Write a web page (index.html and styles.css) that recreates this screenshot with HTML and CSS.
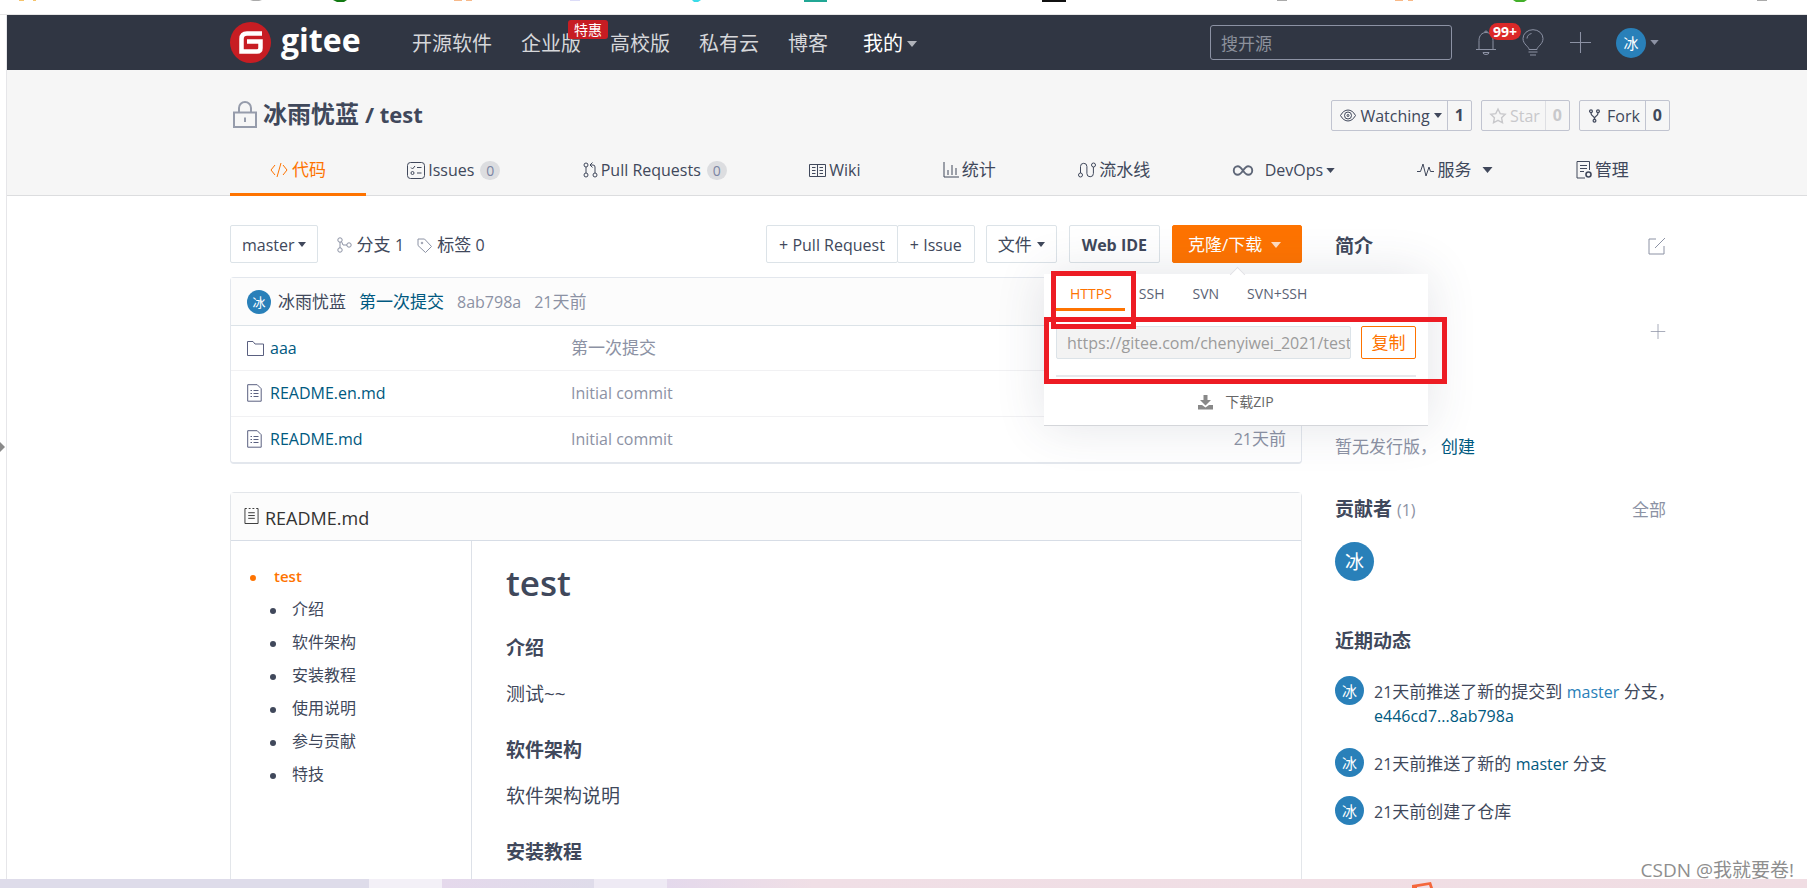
FILE: index.html
```html
<!DOCTYPE html>
<html lang="zh-CN">
<head>
<meta charset="utf-8">
<title>冰雨忧蓝/test - Gitee</title>
<link rel="stylesheet" href="styles.css">
</head>
<body>
<svg class="sprite" aria-hidden="true">
  <symbol id="file" viewBox="0 0 15 18"><path d="M.7.700h9.500l4 4v12.500H.7zM3.500 6.500h1.500M3.500 9.500h1.500M3.500 12.500h1.500M6.500 6.500h5M6.500 9.500h5M6.500 12.500h5"/></symbol>
  <symbol id="caret" viewBox="0 0 10 6"><path d="M0 0h10L5 6z"/></symbol>
  <symbol id="plus" viewBox="0 0 20 20"><path d="M10 0v20M0 10h20"/></symbol>
</svg>
<div class="bookmarks">
  <svg class="bookmarks-icons" width="1807" height="3" aria-hidden="true">
    <path d="M19 0h5v1h-5zM33 0h3v1h-3z" fill="#f5c36b"/><path d="M250 0h12l-3 1h-6z" fill="#aaa"/>
    <path d="M333 0h14l-3 2h-7z" fill="#127a12"/><path d="M454 0h8v1h-8zM466 0h6v1h-6z" fill="#f7b98a"/>
    <path d="M570 0h10v1h-10z" fill="#dcdcf8"/><path d="M692 0h9l-3 2h-4z" fill="#3adbe8"/>
    <path d="M804 0h23v2h-23z" fill="#21a795"/><path d="M1042 0h24v2h-24z" fill="#111"/>
    <path d="M1277 0h10v1h-10z" fill="#aaa"/><path d="M1395 0h8v1h-8zM1408 0h5v1h-5z" fill="#f9b987"/>
    <path d="M1513 0h14l-3 2h-8z" fill="#43b02a"/><path d="M1757 0h10v1h-10z" fill="#aaa"/>
  </svg>
</div>
<div class="window">
  <div class="edge"><svg width="5" height="10" viewBox="0 0 5 10"><path d="M0 0l5 5-5 5z" fill="#8a8a8a"/></svg></div>
  <div class="page">
    <header class="topbar">
      <div class="container topbar-row">
        <a class="logo" href="#" aria-label="gitee">
          <svg width="41" height="41" viewBox="0 0 41 41"><circle cx="20.500" cy="20.500" r="20.500" fill="#c71d23"/><path d="M32 11.500H17q-5.500 0-5.500 5.500v12.500H27q3.500 0 3.500-3.500v-6.500H17" fill="none" stroke="#fff" stroke-width="4.500"/></svg>
          <span>gitee</span>
        </a>
        <nav class="mainnav">
          <a href="#">开源软件</a>
          <a href="#" class="promo">企业版<span class="promo-badge">特惠</span></a>
          <a href="#">高校版</a><a href="#">私有云</a><a href="#">博客</a>
          <a href="#" class="mine">我的<svg class="caret" width="10" height="6"><use href="#caret"/></svg></a>
        </nav>
        <input class="search" type="search" placeholder="搜开源" aria-label="搜开源">
        <div class="tools">
          <a href="#" class="bell" aria-label="通知"><svg width="20" height="25" viewBox="0 0 20 25"><path d="M0 19.500h20M3 19.500V10.500c0-5 3-8 7-8s7 3 7 8v9M8.500 2.500a1.500 1.500 0 0 1 3 0M7 22.500h6a3 2 0 0 1-6 0z"/></svg><span class="count-badge">99+</span></a>
          <a href="#" class="bulb" aria-label="帮助"><svg width="22" height="27" viewBox="0 0 22 27"><path d="M7 20.500c0-3-6-5-6-11a10 8.800 0 0 1 20 0c0 6-6 8-6 11zM6.500 23h9M8 26h6M5 9.500c0-2.500 2-4.500 4.500-5"/></svg></a>
          <a href="#" class="add" aria-label="新建"><svg width="21" height="21"><use href="#plus"/></svg></a>
          <a href="#" class="me"><span class="avatar avatar-30">冰</span><svg class="caret" width="9" height="5"><use href="#caret"/></svg></a>
        </div>
      </div>
    </header>

    <section class="repohead">
      <div class="container">
        <div class="repo-row">
          <h1 class="repo-title"><svg width="24" height="27" viewBox="0 0 24 27"><path d="M1 11.500h22V26H1zM6 11.500V7a6 6 0 0 1 12 0v4.500M12 16.500v4.500"/></svg><span>冰雨忧蓝</span><span class="latin">/ test</span></h1>
          <div class="repo-actions">
            <div class="split"><button type="button"><svg class="ico" width="16" height="13" viewBox="0 0 16 12"><path d="M.5 6c3.800-7.300 11.200-7.300 15 0-3.800 7.300-11.200 7.300-15 0z"/><circle cx="8" cy="6" r="3.500"/><circle cx="8" cy="6" r="1"/></svg>Watching<svg class="caret" width="8" height="5"><use href="#caret"/></svg></button><a href="#">1</a></div>
            <div class="split disabled"><button type="button"><svg class="ico bold" width="16" height="16" viewBox="0 0 16 16"><path d="M8 1l2.200 4.600 5 .7-3.600 3.500.9 5L8 12.400l-4.500 2.400.9-5L.8 6.300l5-.7z"/></svg>Star</button><a href="#">0</a></div>
            <div class="split fork"><button type="button"><svg class="ico bold" width="13" height="14" viewBox="0 0 13 16"><circle cx="2.500" cy="2.500" r="1.600"/><circle cx="10.500" cy="2.500" r="1.600"/><circle cx="6.500" cy="13.500" r="1.600"/><path d="M2.500 4.500c0 4.500 4 2.500 4 7 0-4.500 4-2.500 4-7"/></svg>Fork</button><a href="#">0</a></div>
          </div>
        </div>
        <nav class="tabs">
          <a href="#" class="active"><svg class="ico" width="18" height="16" viewBox="0 0 18 16"><path d="M5 3L1 8l4 5M13 3l4 5-4 5M11 1L7 15"/></svg>代码</a>
          <a href="#"><svg class="ico" width="18" height="17" viewBox="0 0 18 17"><rect x=".5" y=".5" width="17" height="16" rx="3"/><path d="M4 5.500l1.500 1.500L8 4M10 5.500h4.500M10 11h4.500"/><circle cx="5.500" cy="11" r="1.500"/></svg><span class="latin">Issues</span><span class="num">0</span></a>
          <a href="#"><svg class="ico" width="15" height="16" viewBox="0 0 15 16"><circle cx="3" cy="3" r="2"/><circle cx="3" cy="13" r="2"/><circle cx="12" cy="13" r="2"/><path d="M3 5v6M12 11V5q0-2-2-2H7M9.500 .5L7 3l2.500 2.500"/></svg><span class="latin">Pull Requests</span><span class="num">0</span></a>
          <a href="#"><svg class="ico" width="17" height="13" viewBox="0 0 17 13"><path d="M.5.500h16v12H.5zM8.500.500v12M3 3.500h3.500M3 6.500h3.500M3 9.500h3.500M10.500 3.500H14M10.500 6.500H14M10.500 9.500H14"/></svg><span class="latin">Wiki</span></a>
          <a href="#"><svg class="ico" width="16" height="16" viewBox="0 0 16 16"><path d="M1 0v15h15M5 13V8M9 13V3M13 13V6"/></svg>统计</a>
          <a href="#"><svg class="ico" width="18" height="16" viewBox="0 0 18 16"><circle cx="2.500" cy="13" r="2"/><circle cx="15.500" cy="3" r="2"/><path d="M2.500 11V4.500a3.200 3.200 0 0 1 6.400 0v7a3.200 3.200 0 0 0 6.500 0V5"/></svg>流水线</a>
          <a href="#" class="devops"><svg class="ico bold" width="20" height="11" viewBox="0 0 21 11"><path d="M10.500 5.500C8.500 2.500 7 1 5 1a4.200 4.500 0 0 0 0 9c2 0 3.500-1.500 5.500-4.500S14 1 16 1a4.200 4.500 0 0 1 0 9c-2 0-3.500-1.500-5.500-4.500z"/></svg><span class="latin">DevOps</span><svg class="caret" width="9" height="5"><use href="#caret"/></svg></a>
          <a href="#" class="service"><svg class="ico" width="17" height="14" viewBox="0 0 17 14"><path d="M0 8.500h3.500L6 1l3 12 3-9 1.500 4.500H17"/></svg>服务<svg class="caret" width="11" height="6"><use href="#caret"/></svg></a>
          <a href="#"><svg class="ico" width="16" height="18" viewBox="0 0 16 18"><path d="M13.500 9V.500H1V17h8M4 4.500h7M4 7.500h7M4 10.500h4"/><circle cx="12.500" cy="13.500" r="2.500" stroke-width="1.600"/></svg>管理</a>
        </nav>
      </div>
    </section>

    <main class="container columns">
      <div class="left">
        <div class="toolbar">
          <button type="button" class="btn branch">master<svg class="caret" width="8" height="5"><use href="#caret"/></svg></button>
          <a href="#" class="ref first"><svg width="15" height="16" viewBox="0 0 15 16"><circle cx="3" cy="3" r="2.200"/><circle cx="3" cy="13" r="2.200"/><circle cx="12" cy="8" r="2.200"/><path d="M3 5v6M4.500 4.500L6 8h4"/></svg><span>分支 <span class="latin">1</span></span></a>
          <a href="#" class="ref"><svg width="15" height="15" viewBox="0 0 15 15"><path d="M1 1h6.500L14.500 8.500l-6 6L1 7.500z"/><circle cx="5" cy="5" r=".8"/></svg><span>标签 <span class="latin">0</span></span></a>
          <div class="group"><button type="button" class="btn">+ Pull Request</button><button type="button" class="btn">+ Issue</button></div>
          <button type="button" class="btn zh">文件<svg class="caret" width="8" height="5"><use href="#caret"/></svg></button>
          <button type="button" class="btn ide">Web IDE</button>
          <div class="clone">
            <button type="button" class="btn primary">克隆/下载<svg class="caret" width="10" height="6"><use href="#caret"/></svg></button>
            <div class="popup">
              <div class="protocols"><button type="button" class="on">HTTPS</button><button type="button">SSH</button><button type="button">SVN</button><button type="button">SVN+SSH</button></div>
              <div class="url"><input type="text" readonly aria-label="仓库地址" value="https://gitee.com/chenyiwei_2021/test.git"><button type="button">复制</button></div>
              <a href="#" class="zip"><svg width="15" height="15" viewBox="0 0 15 15"><path d="M5.500 0h4v5H13L7.500 10.500 2 5h3.500zM0 10h4l3.500 2.500L11 10h4v4.500H0z"/></svg>下载ZIP</a>
              <div class="mark mark-tab"></div>
              <div class="mark mark-url"></div>
            </div>
          </div>
        </div>

        <table class="files">
          <thead><tr><th colspan="3"><div class="commit"><span class="avatar avatar-24">冰</span><span class="author">冰雨忧蓝</span><a href="#">第一次提交</a><span class="latin">8ab798a</span><span><span class="latin">21</span>天前</span></div></th></tr></thead>
          <tbody>
            <tr><td class="name"><a href="#"><svg width="17" height="15" viewBox="0 0 17 15"><path d="M.5.500H6l2 2.500h8.500v11.500H.5z"/></svg>aaa</a></td><td class="zh">第一次提交</td><td class="zh when"></td></tr>
            <tr><td class="name"><a href="#"><svg class="doc-icon" width="15" height="18"><use href="#file"/></svg>README.en.md</a></td><td>Initial commit</td><td class="zh when"></td></tr>
            <tr><td class="name"><a href="#"><svg class="doc-icon" width="15" height="18"><use href="#file"/></svg>README.md</a></td><td>Initial commit</td><td class="zh when"><span class="latin">21</span>天前</td></tr>
          </tbody>
        </table>

        <section class="readme">
          <div class="readme-head"><svg width="15" height="18" viewBox="0 0 16 18"><path d="M1 1v16h14V1M1 1h2M5 1h2M9 1h2M13 1h2M4.500 5.500h7M4.500 8.500h7M4.500 11.500h7"/></svg>README.md</div>
          <div class="readme-body">
            <ul class="toc"><li class="current"><a href="#">test</a>
              <ul><li><a href="#">介绍</a></li><li><a href="#">软件架构</a></li><li><a href="#">安装教程</a></li><li><a href="#">使用说明</a></li><li><a href="#">参与贡献</a></li><li><a href="#">特技</a></li></ul></li></ul>
            <article class="doc">
              <h2>test</h2>
              <h3>介绍</h3><p>测试~~</p>
              <h3>软件架构</h3><p>软件架构说明</p>
              <h3>安装教程</h3>
            </article>
          </div>
        </section>
      </div>

      <aside class="side">
        <div class="side-head intro"><h2>简介</h2><a href="#" aria-label="编辑"><svg width="18" height="18" viewBox="0 0 18 18"><path d="M8 2H1v15h15v-8M7 11L17 1"/></svg></a></div>
        <div class="side-add"><a href="#" aria-label="添加"><svg width="16" height="15" viewBox="0 0 20 20"><use href="#plus"/></svg></a></div>
        <p class="release">暂无发行版，<a href="#">创建</a></p>
        <div class="side-head"><h2>贡献者 <small>(1)</small></h2><a href="#">全部</a></div>
        <span class="avatar avatar-39">冰</span>
        <h2 class="activity-title">近期动态</h2>
        <ul class="activity">
          <li><span class="avatar avatar-29">冰</span><p><span class="latin">21</span>天前推送了新的提交到 <a href="#" class="latin hover">master</a> 分支，<br><a href="#" class="latin">e446cd7...8ab798a</a></p></li>
          <li><span class="avatar avatar-29">冰</span><p><span class="latin">21</span>天前推送了新的 <a href="#" class="latin">master</a> 分支</p></li>
          <li><span class="avatar avatar-29">冰</span><p><span class="latin">21</span>天前创建了仓库</p></li>
        </ul>
      </aside>
    </main>
  </div>
</div>
<div class="watermark">CSDN @我就要卷!</div>
<footer class="taskbar"><svg width="24" height="6" viewBox="0 0 24 6"><path d="M1 6V3l19-3 2 6h-3l-1-3-12 2v1z" fill="#f4673c"/></svg></footer>
</body>
</html>
```
FILE: styles.css
```css
* { box-sizing: border-box; }
body {
  margin: 0;
  height: 100vh;
  display: flex;
  flex-direction: column;
  overflow: hidden;
  background: #fff;
  color: #40485b;
  font: 17px/24px "Open Sans", "Noto Sans CJK SC", sans-serif;
}
a { color: inherit; text-decoration: none; }
button, input { font: inherit; color: inherit; }
h1, h2, h3, p, ul { margin: 0; padding: 0; }
ul { list-style: none; }
svg { flex: none; fill: none; stroke: currentColor; overflow: visible; }
.sprite { position: absolute; width: 0; height: 0; }
.caret { fill: currentColor; stroke: none; }
.latin { font-size: 16px; }

.bookmarks { flex: none; height: 15px; border-bottom: 1px solid #e6e6e6; overflow: hidden; }
.bookmarks-icons { display: block; stroke: none; }
.window { flex: 1; min-height: 0; display: flex; }
.edge { width: 7px; border-right: 1px solid #e6e6e9; display: flex; align-items: center; }
.edge svg { stroke: none; }
.page { flex: 1; min-width: 0; overflow: hidden; }
.container { width: 80%; max-width: 1440px; margin-left: 223px; }

.topbar { background: #303643; height: 55px; color: #d6d7da; }
.topbar-row { height: 55px; display: flex; align-items: center; }
.logo { display: flex; align-items: center; gap: 10px; width: 182px; color: #fff; font: bold 32px/40px "Open Sans", sans-serif; }
.logo svg { stroke: none; }
.logo span { padding-bottom: 6px; }
.mainnav { display: flex; gap: 29px; padding-top: 2px; font-size: 20px; }
.promo { position: relative; }
.promo-badge { position: absolute; left: 47px; top: -12px; width: 40px; height: 19px; border-radius: 3px; background: #c71d23; color: #fff; font-size: 14px; line-height: 19px; text-align: center; }
.mine { display: flex; align-items: center; gap: 4px; margin-left: 6px; color: #fff; }
.mine .caret { color: #b0b3ba; }
.search { margin-left: auto; width: 242px; height: 35px; padding: 1px 10px 0; border: 1px solid #8c92a4; border-radius: 3px; background: transparent; }
.search::placeholder { color: #8c919c; }
.tools { display: flex; align-items: center; color: #8c92a4; margin-right: 11px; padding-left: 24px; }
.tools a { display: flex; align-items: center; }
.bell { position: relative; margin-right: 26px; }
.count-badge { position: absolute; left: 13px; top: -7px; width: 32px; height: 17px; border-radius: 9px; background: #db2828; color: #fff; font-size: 14px; font-weight: bold; line-height: 17px; text-align: center; }
.bulb { margin-right: 26px; }
.add { margin-right: 25px; }
.me { gap: 4px; }
.avatar { flex: none; display: inline-flex; align-items: center; justify-content: center; border-radius: 50%; background: #2980b9; color: #fff; }
.avatar-30 { width: 30px; height: 30px; font-size: 15px; }
.avatar-24 { width: 24px; height: 24px; font-size: 13px; }
.avatar-39 { width: 39px; height: 39px; font-size: 19px; }
.avatar-29 { width: 29px; height: 29px; font-size: 15px; }

.repohead { background: #f6f6f6; border-bottom: 1px solid #dcdddf; height: 126px; }
.repo-row { height: 80px; padding-top: 30px; display: flex; justify-content: space-between; align-items: flex-start; }
.repo-title { display: flex; align-items: center; gap: 6px; padding-left: 3px; font-size: 24px; line-height: 28px; }
.repo-title svg { color: #969cab; stroke-width: 2; }
.repo-title .latin { font-size: 22px; }
.repo-actions { display: flex; gap: 9px; font-size: 16px; }
.split { display: flex; height: 31px; border: 1px solid #c1c4d0; border-radius: 2px; }
.split button { display: flex; align-items: center; gap: 4px; padding: 0 5px 0 8px; border: 0; background: none; }
.split a { padding: 0 7px; border-left: 1px solid #c1c4d0; line-height: 29px; font-weight: bold; }
.fork button { gap: 6px; }
.disabled, .disabled svg { color: #c8c8cb; }
.disabled a { border-color: #dedfe3; }
.tabs { display: flex; height: 46px; }
.tabs a { flex: 1 1 auto; display: flex; align-items: center; justify-content: center; gap: 3px; height: 46px; padding-bottom: 3px; border-bottom: 3px solid transparent; white-space: nowrap; }
.tabs .active { color: #fe7300; border-color: #fe7300; flex: none; gap: 4px; padding-left: 40px; padding-right: 40px; }
.num { width: 20px; height: 19px; margin-left: 3px; border-radius: 10px; background: #dcdde0; color: #7b84a3; font-size: 14px; line-height: 19px; text-align: center; }
.bold { stroke-width: 2; }
.repo-actions .bold { stroke-width: 1.4; }
.devops .bold { color: #5f6778; }
.devops .latin { margin-left: 9px; }
.service .caret { margin-left: 8px; }

.columns { display: flex; gap: 33px; padding-top: 29px; }
.left { flex: 1; min-width: 0; }
.side { width: 335px; }
.toolbar { display: flex; align-items: center; height: 38px; margin-bottom: 14px; }
.btn { display: flex; align-items: center; gap: 5px; height: 38px; padding: 1px 11px 0; border: 1px solid #dce3e8; border-radius: 2px; background: #fff; font-size: 16px; white-space: nowrap; }
.branch { gap: 3px; padding: 1px 11px 0; }
.btn.zh { margin: 0 12px 0 11px; font-size: 17px; }
.ide { padding: 1px 12px 0; font-weight: bold; margin-right: 12px; }
.ref { display: flex; align-items: center; gap: 5px; margin-right: 13px; padding-top: 2px; }
.ref svg { color: #8c92a4; }
.first { margin-left: 19px; }
.group { display: flex; margin-left: auto; }
.group .btn { padding: 1px 12px 0; }
.group .btn + .btn { margin-left: -1px; }
.clone { position: relative; }
.primary { width: 130px; padding: 1px 15px 0; gap: 9px; border-color: #fe7300; background: #fe7300; color: #fff; font-size: 17px; }
.primary .caret { color: #ffdcc0; }
.popup { position: absolute; z-index: 2; left: -128px; top: 49px; width: 384px; height: 152px; padding: 0 12px; background: #fff; border-bottom: 1px solid #d4d6da; box-shadow: 0 0 50px rgba(60, 65, 90, .14); }
.popup::before { content: ""; position: absolute; left: 188px; top: -5px; width: 10px; height: 10px; background: #fff; border: 1px solid #e2e2e6; border-width: 1px 0 0 1px; transform: rotate(45deg); }
.protocols { display: flex; height: 37px; margin-bottom: 15px; }
.protocols button { padding: 5px 14px 0; border: 0; border-bottom: 3px solid transparent; background: none; color: #5a6274; font-size: 14px; }
.protocols .on { padding: 5px 13px 0 14px; color: #fe7300; border-color: #fe7300; }
.url { display: flex; gap: 10px; padding-bottom: 16px; border-bottom: 2px solid #e6e8ec; }
.url input { flex: 1; min-width: 0; height: 33px; padding: 1px 0 0 10px; border: 1px solid #dce3e8; border-radius: 2px; background: #f3f3f3; color: #9b9b9b; font-size: 16px; }
.url button { width: 55px; height: 33px; padding: 0; border: 1px solid #fe7300; border-radius: 2px; background: #fff; color: #fe7300; }
.zip { display: flex; align-items: center; justify-content: center; gap: 12px; height: 50px; color: #666; font-size: 14px; }
.zip svg { fill: #888; stroke: none; }
.mark { position: absolute; border: 5px solid #ed1c24; pointer-events: none; }
.mark-tab { left: 7px; top: -3px; width: 85px; height: 58px; }
.mark-url { left: 0; top: 43px; width: 403px; height: 67px; }

.files { width: 100%; height: 187px; margin-bottom: 28px; border: 1px solid #e3e7ed; border-bottom-width: 2px; border-radius: 4px; border-spacing: 0; color: #8c92a4; font-size: 16px; }
.files th { height: 48px; padding: 0 16px; background: #fcfcfc; border-bottom: 1px solid #dce3e8; font-weight: normal; font-size: 17px; }
.commit { display: flex; align-items: center; gap: 13px; }
.commit .author { color: #40485b; margin-left: -6px; }
.commit a, .name a, .release a, .activity a { color: #005980; }
.files td { height: 45px; padding: 0 15px 0 0; border-bottom: 1px solid #f1f1f3; }
.files tr:last-child td { border-bottom: 0; }
.files td.zh { font-size: 17px; }
.files .name { width: 340px; padding-left: 16px; }
.name a { display: flex; align-items: center; gap: 6px; }
.name svg { color: #5a6080; }
.name .doc-icon { margin-right: 2px; }
.when { text-align: right; }

.readme { border: 1px solid #e3e6ea; border-radius: 4px; }
.readme-head { display: flex; align-items: center; gap: 6px; height: 48px; padding: 3px 13px 0; background: #fcfcfc; border-bottom: 1px solid #d7dde6; color: #333; font-size: 18px; }
.readme-head svg { margin-bottom: 4px; }
.readme-body { display: flex; min-height: 400px; }
.toc { width: 241px; padding: 19px 0 0 19px; border-right: 1px solid #dde1e8; font-size: 16px; line-height: 33px; }
.toc li::before { content: ""; display: inline-block; width: 6px; height: 6px; margin-right: 18px; border-radius: 3px; background: #40485b; vertical-align: middle; }
.toc ul { padding-left: 20px; }
.toc ul li::before { margin-right: 16px; }
.toc .current > a { color: #fe7300; font-weight: 600; font-size: 15px; }
.toc .current::before { background: #fe7300; }
.doc { padding: 18px 34px; font-size: 19px; line-height: 30px; }
.doc h2 { font-size: 35px; line-height: 48px; font-weight: 600; margin-bottom: 26px; }
.doc h3 { font-size: 19px; line-height: 30px; margin-bottom: 16px; }
.doc p { margin-bottom: 26px; }

.side h2 { font-size: 19px; line-height: 28px; }
.side small { color: #8c92a4; font-size: 16px; font-weight: normal; }
.side-head { display: flex; align-items: center; justify-content: space-between; padding-right: 4px; color: #8c92a4; }
.side-head h2 { color: #40485b; }
.intro { height: 42px; }
.intro svg { display: block; }
.side-add { display: flex; justify-content: flex-end; padding: 57px 4px 96px 0; color: #8c92a4; }
.side-add a { display: flex; }
.release { margin-bottom: 36px; color: #8c92a4; }
.release a { margin-left: 4px; }
.side .avatar-39 { margin: 18px 0 46px; }
.activity-title { margin-bottom: 21px; }
.activity li { display: flex; align-items: flex-start; gap: 10px; margin-bottom: 19px; }
.activity p { padding-top: 4px; white-space: nowrap; }
.activity li:first-child { margin-bottom: 20px; }
.activity .hover { color: #2980b9; }

.watermark { position: absolute; right: 13px; bottom: 6px; color: #8e8e8e; font-size: 19px; }
.taskbar { flex: none; height: 9px; padding: 3px 0 0 1411px; overflow: hidden; background: linear-gradient(90deg, #dedcea 369px, #f3f0f7 369px 442px, #e5d9ec 442px, #dfdcea 594px, #eeeaf4 594px 667px, #e4d9ec 667px, #f0dfe6 45%, #f0dde3); }
.taskbar svg { display: block; stroke: none; }
```
